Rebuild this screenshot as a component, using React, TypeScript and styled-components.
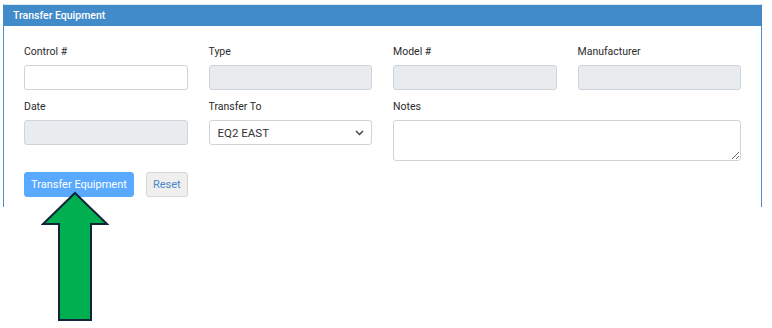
import React from 'react';
import styled, { createGlobalStyle } from 'styled-components';

const GlobalStyle = createGlobalStyle`
  html, body {
    margin: 0;
    padding: 0;
    background: #ffffff;
  }
  body {
    font-family: Roboto, "Liberation Sans", Arial, sans-serif;
    color: #333333;
  }
`;

const Page = styled.div`
  position: relative;
  width: 772px;
  height: 328px;
  padding: 4px 0 0 3px;
  box-sizing: border-box;
`;

const Panel = styled.section`
  width: 759px;
  height: 203px;
  box-sizing: border-box;
  border: 1px solid #4a8fcf;
  border-top: 1px solid #dfe8f1;
  border-bottom: none;
  display: flex;
  flex-direction: column;
`;

const PanelHeader = styled.header`
  height: 21px;
  background: #418bca;
  color: #ffffff;
  font-size: 10.5px;
  font-weight: 500;
  line-height: 21px;
  padding-left: 10px;
  margin: 0 -1px;
`;

const PanelBody = styled.div`
  padding: 19px 20px 0 20px;
`;

const FormGrid = styled.div`
  display: grid;
  grid-template-columns: repeat(4, 1fr);
  column-gap: 21px;
  row-gap: 10px;
  align-items: start;
`;

const Field = styled.div<{ $span?: number }>`
  display: flex;
  flex-direction: column;
  grid-column: span ${(p) => p.$span ?? 1};
`;

const Label = styled.label`
  font-size: 10.5px;
  line-height: 14px;
  color: #2b2b2b;
  margin-bottom: 6px;
`;

const Input = styled.input`
  box-sizing: border-box;
  height: 25px;
  width: 100%;
  border: 1px solid #ced4da;
  border-radius: 3px;
  background: ${(p) => (p.disabled ? '#e9ecef' : '#ffffff')};
  padding: 0 8px;
  font: inherit;
  font-size: 11.5px;
`;

const SelectWrap = styled.div`
  position: relative;
  height: 25px;
`;

const Select = styled.select`
  box-sizing: border-box;
  appearance: none;
  height: 25px;
  width: 100%;
  border: 1px solid #ced4da;
  border-radius: 3px;
  background: #ffffff;
  padding: 0 8px;
  font-family: Roboto, "Liberation Sans", Arial, sans-serif;
  font-size: 11.5px;
  color: #333333;
`;

const Chevron = styled.svg`
  position: absolute;
  right: 8px;
  top: 10px;
  pointer-events: none;
`;

const Notes = styled.textarea`
  box-sizing: border-box;
  height: 41px;
  width: 100%;
  border: 1px solid #ced4da;
  border-radius: 3px;
  background: #ffffff;
  font: inherit;
  font-size: 11.5px;
  resize: vertical;
`;

const Actions = styled.div`
  display: flex;
  gap: 12px;
  margin-top: 11px;
`;

const Button = styled.button<{ $primary?: boolean }>`
  height: 25px;
  box-sizing: border-box;
  padding: 0 6px;
  border-radius: 3px;
  font-family: Roboto, "Liberation Sans", Arial, sans-serif;
  font-size: 11px;
  cursor: pointer;
  border: 1px solid ${(p) => (p.$primary ? '#59a9ff' : '#d6d6d6')};
  background: ${(p) => (p.$primary ? '#59a9ff' : '#efefef')};
  color: ${(p) => (p.$primary ? '#ffffff' : '#4a86c5')};
`;

const Arrow = styled.svg`
  position: absolute;
  left: 41px;
  top: 191px;
`;

export default function App() {
  return (
    <>
      <GlobalStyle />
      <Page>
        <Panel>
          <PanelHeader>Transfer Equipment</PanelHeader>
          <PanelBody>
            <FormGrid>
              <Field>
                <Label>Control #</Label>
                <Input />
              </Field>
              <Field>
                <Label>Type</Label>
                <Input disabled />
              </Field>
              <Field>
                <Label>Model #</Label>
                <Input disabled />
              </Field>
              <Field>
                <Label>Manufacturer</Label>
                <Input disabled />
              </Field>
              <Field>
                <Label>Date</Label>
                <Input disabled />
              </Field>
              <Field>
                <Label>Transfer To</Label>
                <SelectWrap>
                  <Select defaultValue="EQ2 EAST">
                    <option>EQ2 EAST</option>
                  </Select>
                  <Chevron width="9" height="6" viewBox="0 0 9 6">
                    <path d="M1 1 L4.5 4.5 L8 1" fill="none" stroke="#444" strokeWidth="1.5" />
                  </Chevron>
                </SelectWrap>
              </Field>
              <Field $span={2}>
                <Label>Notes</Label>
                <Notes />
              </Field>
            </FormGrid>
            <Actions>
              <Button $primary>Transfer Equipment</Button>
              <Button>Reset</Button>
            </Actions>
          </PanelBody>
        </Panel>
        <Arrow width="68" height="131" viewBox="0 0 68 131">
          <path
            d="M34 2 L66 33 L50 33 L50 129 L18 129 L18 33 L2 33 Z"
            fill="#00b050"
            stroke="#10253a"
            strokeWidth="2"
            strokeLinejoin="miter"
          />
        </Arrow>
      </Page>
    </>
  );
}
